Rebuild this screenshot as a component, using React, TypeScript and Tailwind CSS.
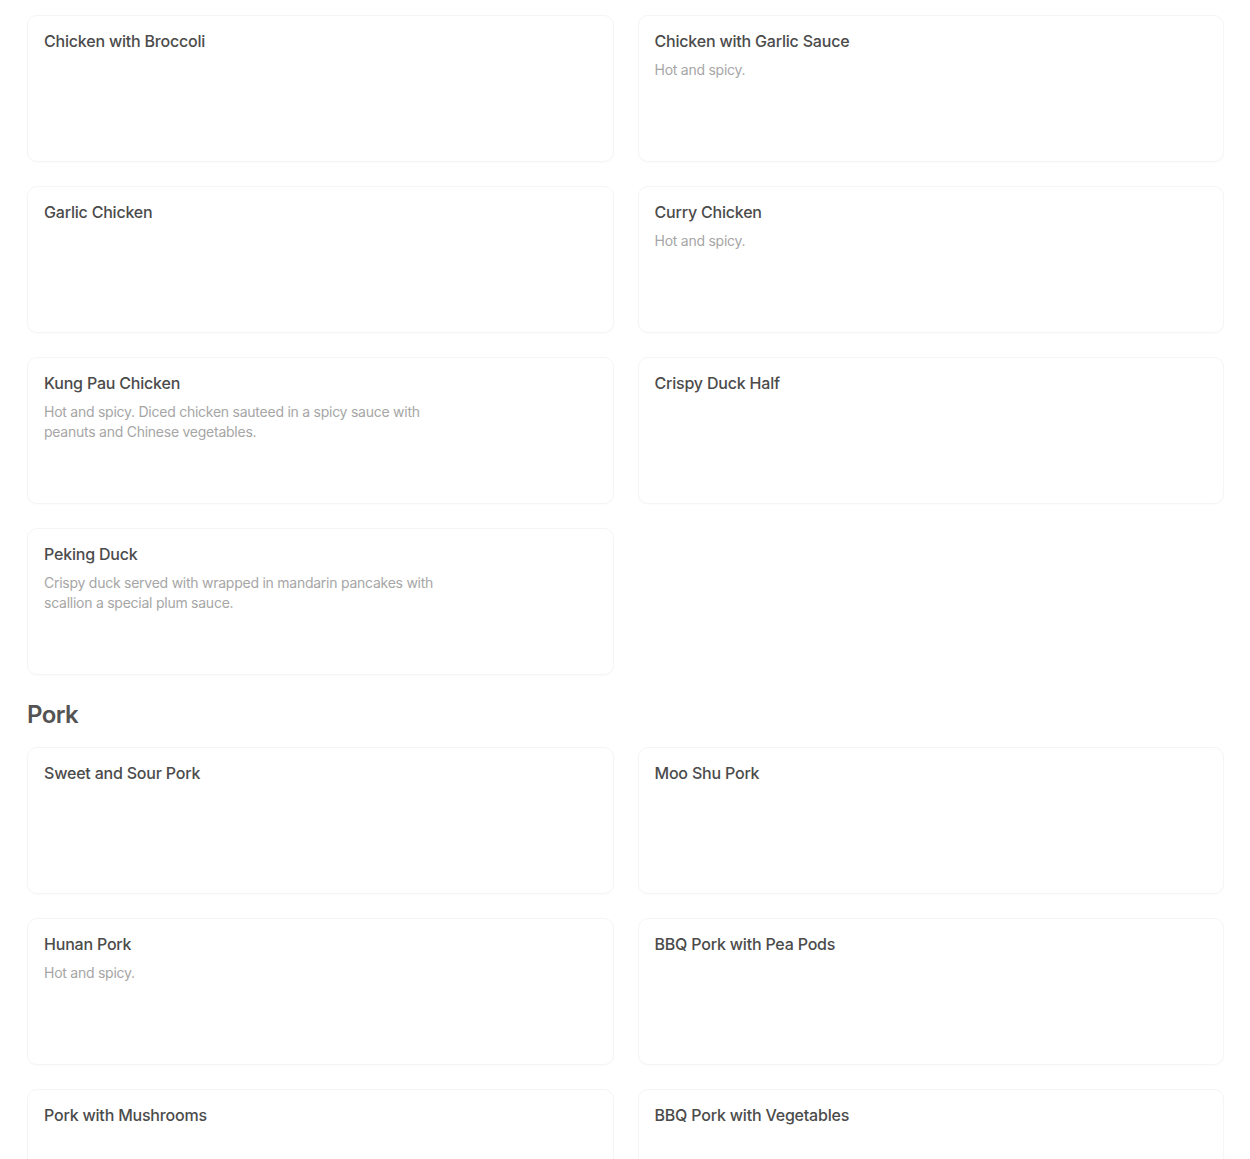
import React from "react";

type Item = { name: string; desc?: string };

const chicken: Item[] = [
  { name: "Chicken with Broccoli" },
  { name: "Chicken with Garlic Sauce", desc: "Hot and spicy." },
  { name: "Garlic Chicken" },
  { name: "Curry Chicken", desc: "Hot and spicy." },
  {
    name: "Kung Pau Chicken",
    desc: "Hot and spicy. Diced chicken sauteed in a spicy sauce with peanuts and Chinese vegetables.",
  },
  { name: "Crispy Duck Half" },
  {
    name: "Peking Duck",
    desc: "Crispy duck served with wrapped in mandarin pancakes with scallion a special plum sauce.",
  },
];

const pork: Item[] = [
  { name: "Sweet and Sour Pork" },
  { name: "Moo Shu Pork" },
  { name: "Hunan Pork", desc: "Hot and spicy." },
  { name: "BBQ Pork with Pea Pods" },
  { name: "Pork with Mushrooms" },
  { name: "BBQ Pork with Vegetables" },
];

function Card({ item }: { item: Item }) {
  return (
    <div className="h-[147px] rounded-[10px] border border-[#f5f5f5] bg-white px-4 pt-[15px] shadow-[0_1px_2px_rgba(0,0,0,0.02)]">
      <div className="text-[16px] leading-5 font-medium tracking-[-0.2px] text-[#4b4b4b]">{item.name}</div>
      {item.desc && (
        <div className="mt-[9px] max-w-[400px] text-[14px] leading-5 tracking-[-0.25px] text-[#a6a6a6]">
          {item.desc}
        </div>
      )}
    </div>
  );
}

export default function App() {
  return (
    <div
      className="min-h-screen bg-white pl-[27px] pr-[26px] pt-[15px] pb-8"
      style={{ fontFamily: "Inter, 'Noto Sans', sans-serif" }}
    >
      <div className="grid grid-cols-2 gap-x-[24px] gap-y-[24px]">
        {chicken.map((it) => (
          <Card key={it.name} item={it} />
        ))}
      </div>
      <h2 className="mt-[24px] mb-[16px] text-[24px] leading-8 font-semibold tracking-[-0.6px] text-[#545454]">
        Pork
      </h2>
      <div className="grid grid-cols-2 gap-x-[24px] gap-y-[24px]">
        {pork.map((it) => (
          <Card key={it.name} item={it} />
        ))}
      </div>
    </div>
  );
}
